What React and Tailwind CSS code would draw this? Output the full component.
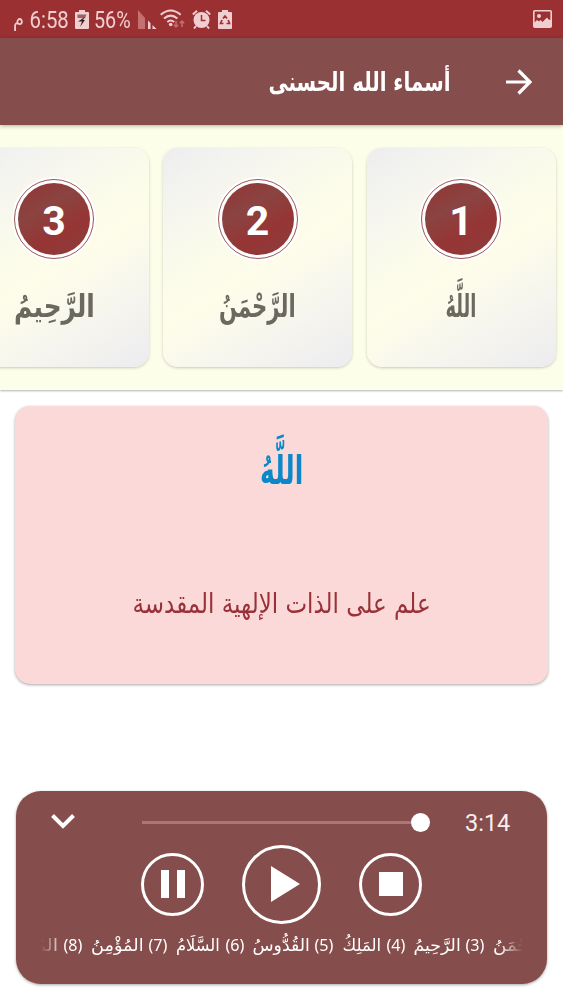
import React, { useLayoutEffect, useRef, useState } from 'react';

const names = [
  { id: 1, name: 'اللَّهُ', width: 31 },
  { id: 2, name: 'الرَّحْمَنُ', width: 77 },
  { id: 3, name: 'الرَّحِيمُ', width: 81 },
];

const ticker = [
  { id: 3, name: 'الرَّحِيمُ', width: 47 },
  { id: 4, name: 'المَلِكُ', width: 39 },
  { id: 5, name: 'القُدُّوسُ', width: 57 },
  { id: 6, name: 'السَّلَامُ', width: 44 },
  { id: 7, name: 'المُؤْمِنُ', width: 53 },
  { id: 8, name: 'المُهَيْمِنُ', width: 62 },
];

// Squeezes or stretches a single line so it fills the given width
const FitText = ({ width, className = '', children }) => {
  const ref = useRef(null);
  const [scale, setScale] = useState(1);

  useLayoutEffect(() => {
    if (ref.current) setScale(width / ref.current.offsetWidth);
  }, [width]);

  return (
    <span className="flex shrink-0 justify-center" style={{ width }}>
      <span
        ref={ref}
        className={`inline-block shrink-0 whitespace-nowrap ${className}`}
        style={{ transform: `scaleX(${scale})` }}
      >
        {children}
      </span>
    </span>
  );
};

const BatteryIcon = () => (
  <svg viewBox="0 0 14 19" className="h-[19px] w-[14px]">
    <path fill="#f1cfd0" d="M4 0h6v2h3q1 0 1 1v15q0 1-1 1H1q-1 0-1-1V3q0-1 1-1h3z" />
    <path fill="#9b6264" d="M2.500 4.500h9L10 8H2.500z" />
    <path fill="#3c2022" d="M10.500 6.500 3 11.500h4l-2 5.500 5-7H8z" />
  </svg>
);

const SignalIcon = () => (
  <svg viewBox="0 0 19 19" className="h-[19px] w-[19px]">
    <path fill="#c46f70" d="M0 0 7 8v11H0z" />
    <path fill="#f1cfd0" d="M10 10.500 12.500 13v6H10zM14.500 15 18.500 19h-4z" />
  </svg>
);

const WifiIcon = () => (
  <svg viewBox="0 0 25 20" className="h-[20px] w-[25px]" fill="none">
    <g stroke="#f1cfd0" strokeWidth="2">
      <path d="M.7 5.700q10-8.500 20 0" />
      <path d="M4 9.500q6.700-5.800 13.400 0" />
      <path d="M7.300 13q3.400-3 6.800 0" />
    </g>
    <circle cx="10.700" cy="15.500" r="1.800" fill="#f1cfd0" />
    <path stroke="#c46f70" strokeWidth="1.500" d="M16 12v6m-2.200-2.200L16 18l2.200-2.200M22 18v-6m-2.200 2.200L22 12l2.200 2.200" />
  </svg>
);

const AlarmIcon = () => (
  <svg viewBox="0 0 19 19" className="h-[19px] w-[19px]">
    <circle cx="9.500" cy="10" r="8" fill="#f1cfd0" />
    <path fill="none" stroke="#f1cfd0" strokeWidth="2" d="M.8 4.500 5 .8M18.200 4.500 14 .8M4 16l-2 2.500M15 16l2 2.500" />
    <path fill="none" stroke="#9b3235" strokeWidth="1.500" d="M9.500 5v5.500h4" />
  </svg>
);

const RecycleBattery = () => (
  <svg viewBox="0 0 14 19" className="h-[19px] w-[14px]">
    <path fill="#f1cfd0" d="M4 0h6v2h3q1 0 1 1v15q0 1-1 1H1q-1 0-1-1V3q0-1 1-1h3z" />
    <path fill="none" stroke="#9b3235" strokeWidth="1.700" d="M5 8.500 7 6l2 2.500M10.200 10l1.300 3.500H8.500M5.500 13.500h-3L4 10" />
  </svg>
);

const PictureIcon = () => (
  <svg viewBox="0 0 19 18" className="h-[18px] w-[19px]">
    <rect x=".8" y=".8" width="17.400" height="16.400" rx="1" fill="none" stroke="#f1cfd0" strokeWidth="1.600" />
    <circle cx="6" cy="6" r="2" fill="#f1cfd0" />
    <path fill="#f1cfd0" d="M1 13 4 10l2 1.500L7.500 10l2 2L14 7.500l1.500 2L18 10v7H1z" />
  </svg>
);

const StatusBar = () => (
  <div dir="ltr" className="flex h-[38px] shrink-0 items-center bg-[#9b3033] pl-[13px] pr-[11px] text-[#f1cfd0]">
    <FitText width={11} className="font-['DejaVu_Sans'] text-[21px] leading-[24px]">م</FitText>
    <span className="ml-[6px] pt-px">
      <FitText width={39} className="font-[Roboto] text-[24px] leading-none">6:58</FitText>
    </span>
    <span className="ml-[6px]"><BatteryIcon /></span>
    <span className="ml-[5px] pt-px">
      <FitText width={37} className="font-[Roboto] text-[24px] leading-none">56%</FitText>
    </span>
    <span className="ml-[7px]"><SignalIcon /></span>
    <span className="ml-[3px]"><WifiIcon /></span>
    <span className="ml-[7px]"><AlarmIcon /></span>
    <span className="ml-[7px]"><RecycleBattery /></span>
    <span className="ml-auto"><PictureIcon /></span>
  </div>
);

const NameCard = ({ id, name, width }) => (
  <div className="flex h-[219px] w-[189px] shrink-0 flex-col items-center rounded-[15px] bg-[linear-gradient(148deg,#ededef_0%,#f5f5ef_20%,#fbfbeb_40%,#fefdea_54%,#f6f5ee_76%,#ececf0_100%)] pt-[31px] shadow-[0_1px_3px_rgba(0,0,0,0.22)]">
    <div className="flex size-[80px] shrink-0 items-center justify-center rounded-full border border-[#9c5659] bg-white shadow-[0_0_0_2px_#fff]">
      <div className="flex size-[72px] items-center justify-center rounded-full bg-[linear-gradient(150deg,#943434,#8a4441_35%,#963535_65%,#8c3d3c)]">
        <span className="pt-[4px] font-[Roboto] text-[41px] font-bold leading-none text-white">{id}</span>
      </div>
    </div>
    <div className="mt-[22px] flex h-[50px] items-center">
      <FitText
        width={width}
        className="font-['DejaVu_Sans'] text-[31px] font-bold leading-[50px] text-[#6b695f]"
      >
        {name}
      </FitText>
    </div>
  </div>
);

const Player = () => (
  <div dir="ltr" className="ml-auto mr-[16px] mt-[107px] h-[193px] w-[531px] self-start rounded-[25px] bg-[#854d4c] text-white shadow-[0_1px_3px_rgba(0,0,0,0.35)]">
    <div className="flex h-[54px] items-center pt-[8px]">
      <svg viewBox="0 0 24 15" className="-mt-px ml-[35px] h-[15px] w-[24px]" fill="none" stroke="#fff" strokeWidth="4">
        <path d="m1.500 1.500 10.500 10.500L22.500 1.500" />
      </svg>
      <div className="ml-[67px] flex h-[19px] w-[288px] items-center">
        <div className="h-[3px] flex-1 bg-[#ab7675]" />
        <div className="size-[19px] rounded-full bg-white" />
      </div>
      <span className="ml-[35px] pt-[3px] font-[Roboto] text-[23.500px] leading-none text-[#f8eeee]">3:14</span>
    </div>

    <div className="flex h-[78px] items-center pl-[125px]">
      <button className="flex size-[63px] items-center justify-center gap-[8px] rounded-full border-[3px] border-white">
        <span className="h-[28px] w-[8px] bg-white" />
        <span className="h-[28px] w-[8px] bg-white" />
      </button>
      <button className="ml-[38px] flex size-[79px] items-center justify-center rounded-full border-[3px] border-white">
        <svg viewBox="0 0 29 36" className="ml-[7px] h-[36px] w-[29px]">
          <path fill="#fff" d="M0 0v36l29-18z" />
        </svg>
      </button>
      <button className="ml-[38px] flex size-[63px] items-center justify-center rounded-full border-[3px] border-white">
        <span className="size-[24px] bg-white" />
      </button>
    </div>

    <div
      dir="rtl"
      className="ml-[25px] mt-[4px] flex h-[36px] w-[482px] items-center overflow-hidden [mask-image:linear-gradient(to_right,transparent,#000_24px,#000_458px,transparent)]"
    >
      <div className="-mr-[27px] flex shrink-0 items-center gap-[8.500px]">
        <FitText width={57} className="font-['DejaVu_Sans'] text-[17px] leading-[36px]">الرَّحْمَنُ</FitText>
        {ticker.map((item) => (
          <div key={item.id} className="flex shrink-0 items-center gap-[5px]">
            <FitText width={19} className="font-['Noto_Sans'] text-[17px] leading-[36px]">({item.id})</FitText>
            <FitText width={item.width} className="font-['DejaVu_Sans'] text-[17px] leading-[36px]">
              {item.name}
            </FitText>
          </div>
        ))}
      </div>
    </div>
  </div>
);

const App = () => (
  <div dir="rtl" className="flex h-[1000px] w-[563px] flex-col overflow-hidden bg-white">
    <StatusBar />

    {/* App bar */}
    <header className="z-10 flex h-[87px] shrink-0 items-center bg-[#854d4c] pr-[31px] text-white shadow-[0_1px_4px_rgba(0,0,0,0.3)]">
      <svg viewBox="0 0 26 26" className="size-[26px]" fill="none" stroke="#fff" strokeWidth="3.200">
        <path d="M0 13h23.500M12.500 1.500 24 13 12.500 24.500" />
      </svg>
      <h1 className="mr-[56px]">
        <FitText width={182} className="font-['DejaVu_Sans'] text-[26px] font-bold leading-[40px]">
          أسماء الله الحسنى
        </FitText>
      </h1>
    </header>

    {/* Names carousel */}
    <section className="flex h-[265px] shrink-0 gap-[14.500px] bg-[#fdfeea] pr-[7.500px] pt-[23px] shadow-[0_1px_2px_rgba(0,0,0,0.3)]">
      {names.map((item) => (
        <NameCard key={item.id} {...item} />
      ))}
    </section>

    {/* Selected name */}
    <section className="mx-[15px] mt-[16px] flex h-[278px] w-[533px] shrink-0 flex-col items-center rounded-[15px] bg-[#fad9d8] shadow-[0_1px_3px_rgba(0,0,0,0.35)]">
      <div className="mt-[29px] flex h-[70px] items-center">
        <FitText width={43} className="font-['DejaVu_Sans'] text-[40px] font-bold leading-[70px] text-[#0b88ca]">
          اللَّهُ
        </FitText>
      </div>
      <p className="mt-[69px] flex h-[60px] items-center">
        <FitText width={298} className="font-['DejaVu_Sans'] text-[28px] leading-[60px] text-[#9a3038]">
          علم على الذات الإلهية المقدسة
        </FitText>
      </p>
    </section>

    <Player />
  </div>
);

export default App;
